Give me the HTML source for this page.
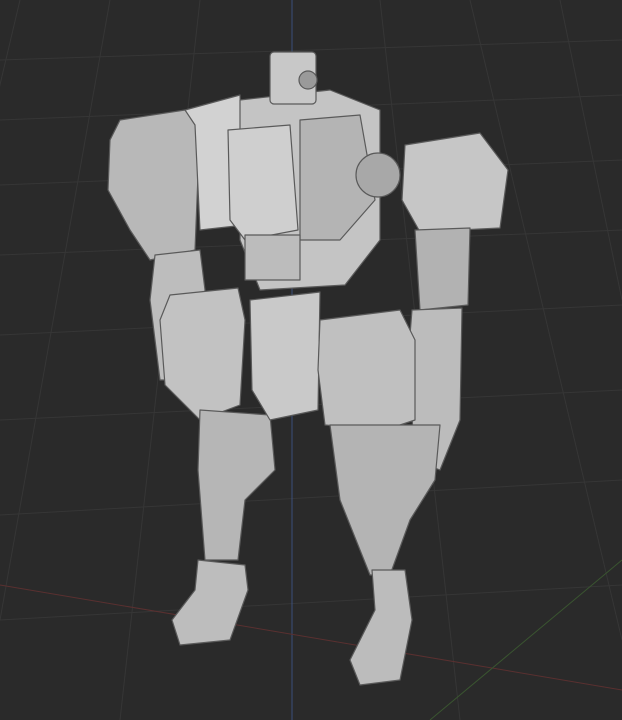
<!DOCTYPE html>
<html><head><meta charset="utf-8"><style>
html,body{margin:0;padding:0;background:#2b2b2b;}
svg{display:block}
</style></head><body>
<svg width="622" height="720" viewBox="0 0 622 720" xmlns="http://www.w3.org/2000/svg">
<rect width="622" height="720" fill="#2a2a2a"/>
<g stroke="#363636" stroke-width="1" fill="none">
<path d="M0 60 L622 40 M0 120 L622 95 M0 185 L622 160 M0 255 L622 230 M0 335 L622 305 M0 420 L622 390 M0 515 L622 480 M0 620 L622 585"/>
<path d="M20 0 L-150 720 M110 0 L0 620 M200 0 L120 720 M380 0 L460 720 M470 0 L622 640 M560 0 L622 300"/>
</g>
<line x1="292" y1="0" x2="292" y2="720" stroke="#3b4f7a" stroke-width="1"/>
<line x1="0" y1="585" x2="622" y2="690" stroke="#5a3030" stroke-width="1"/>
<line x1="430" y1="720" x2="622" y2="560" stroke="#3a5530" stroke-width="1"/>
<g stroke="#5a5a5a" stroke-width="1.2" stroke-linejoin="round">
<!-- left arm big -->
<polygon points="120,120 185,110 200,125 195,250 150,260 130,230 108,190 110,140" fill="#b8b8b8"/>
<polygon points="185,110 240,95 245,225 200,230 195,125" fill="#d2d2d2"/>
<polygon points="155,255 200,250 205,290 195,380 160,380 150,300" fill="#bdbdbd"/>
<!-- torso -->
<polygon points="240,100 330,90 380,110 380,240 345,285 260,290 240,240" fill="#c4c4c4"/>
<polygon points="228,130 290,125 298,230 245,240 230,220" fill="#cfcfcf"/>
<polygon points="300,120 360,115 375,200 340,240 300,240" fill="#b4b4b4"/>
<rect x="245" y="235" width="55" height="45" fill="#bcbcbc"/>
<circle cx="378" cy="175" r="22" fill="#a8a8a8"/>
<!-- head -->
<rect x="270" y="52" width="46" height="52" rx="4" fill="#c8c8c8"/>
<circle cx="308" cy="80" r="9" fill="#9a9a9a"/>
<!-- right arm -->
<polygon points="405,145 480,133 508,170 500,228 420,232 402,200" fill="#c6c6c6"/>
<polygon points="415,230 470,228 468,305 420,310" fill="#b2b2b2"/>
<polygon points="412,310 462,308 460,420 440,470 415,460 408,360" fill="#bcbcbc"/>
<!-- left leg -->
<polygon points="170,295 238,288 245,320 240,405 200,420 165,385 160,320" fill="#c2c2c2"/>
<polygon points="200,410 270,415 275,470 245,500 238,560 205,560 198,470" fill="#b6b6b6"/>
<polygon points="198,560 245,565 248,590 230,640 180,645 172,620 195,590" fill="#bdbdbd"/>
<!-- right leg -->
<polygon points="250,300 320,292 318,410 270,420 252,390" fill="#c9c9c9"/>
<polygon points="320,320 400,310 415,340 415,420 385,430 325,425 318,370" fill="#c0c0c0"/>
<polygon points="330,425 440,425 435,480 410,520 390,575 370,575 340,500" fill="#b4b4b4"/>
<polygon points="372,570 405,570 412,620 400,680 360,685 350,660 375,610" fill="#bcbcbc"/>
</g>
</svg>
</body></html>
